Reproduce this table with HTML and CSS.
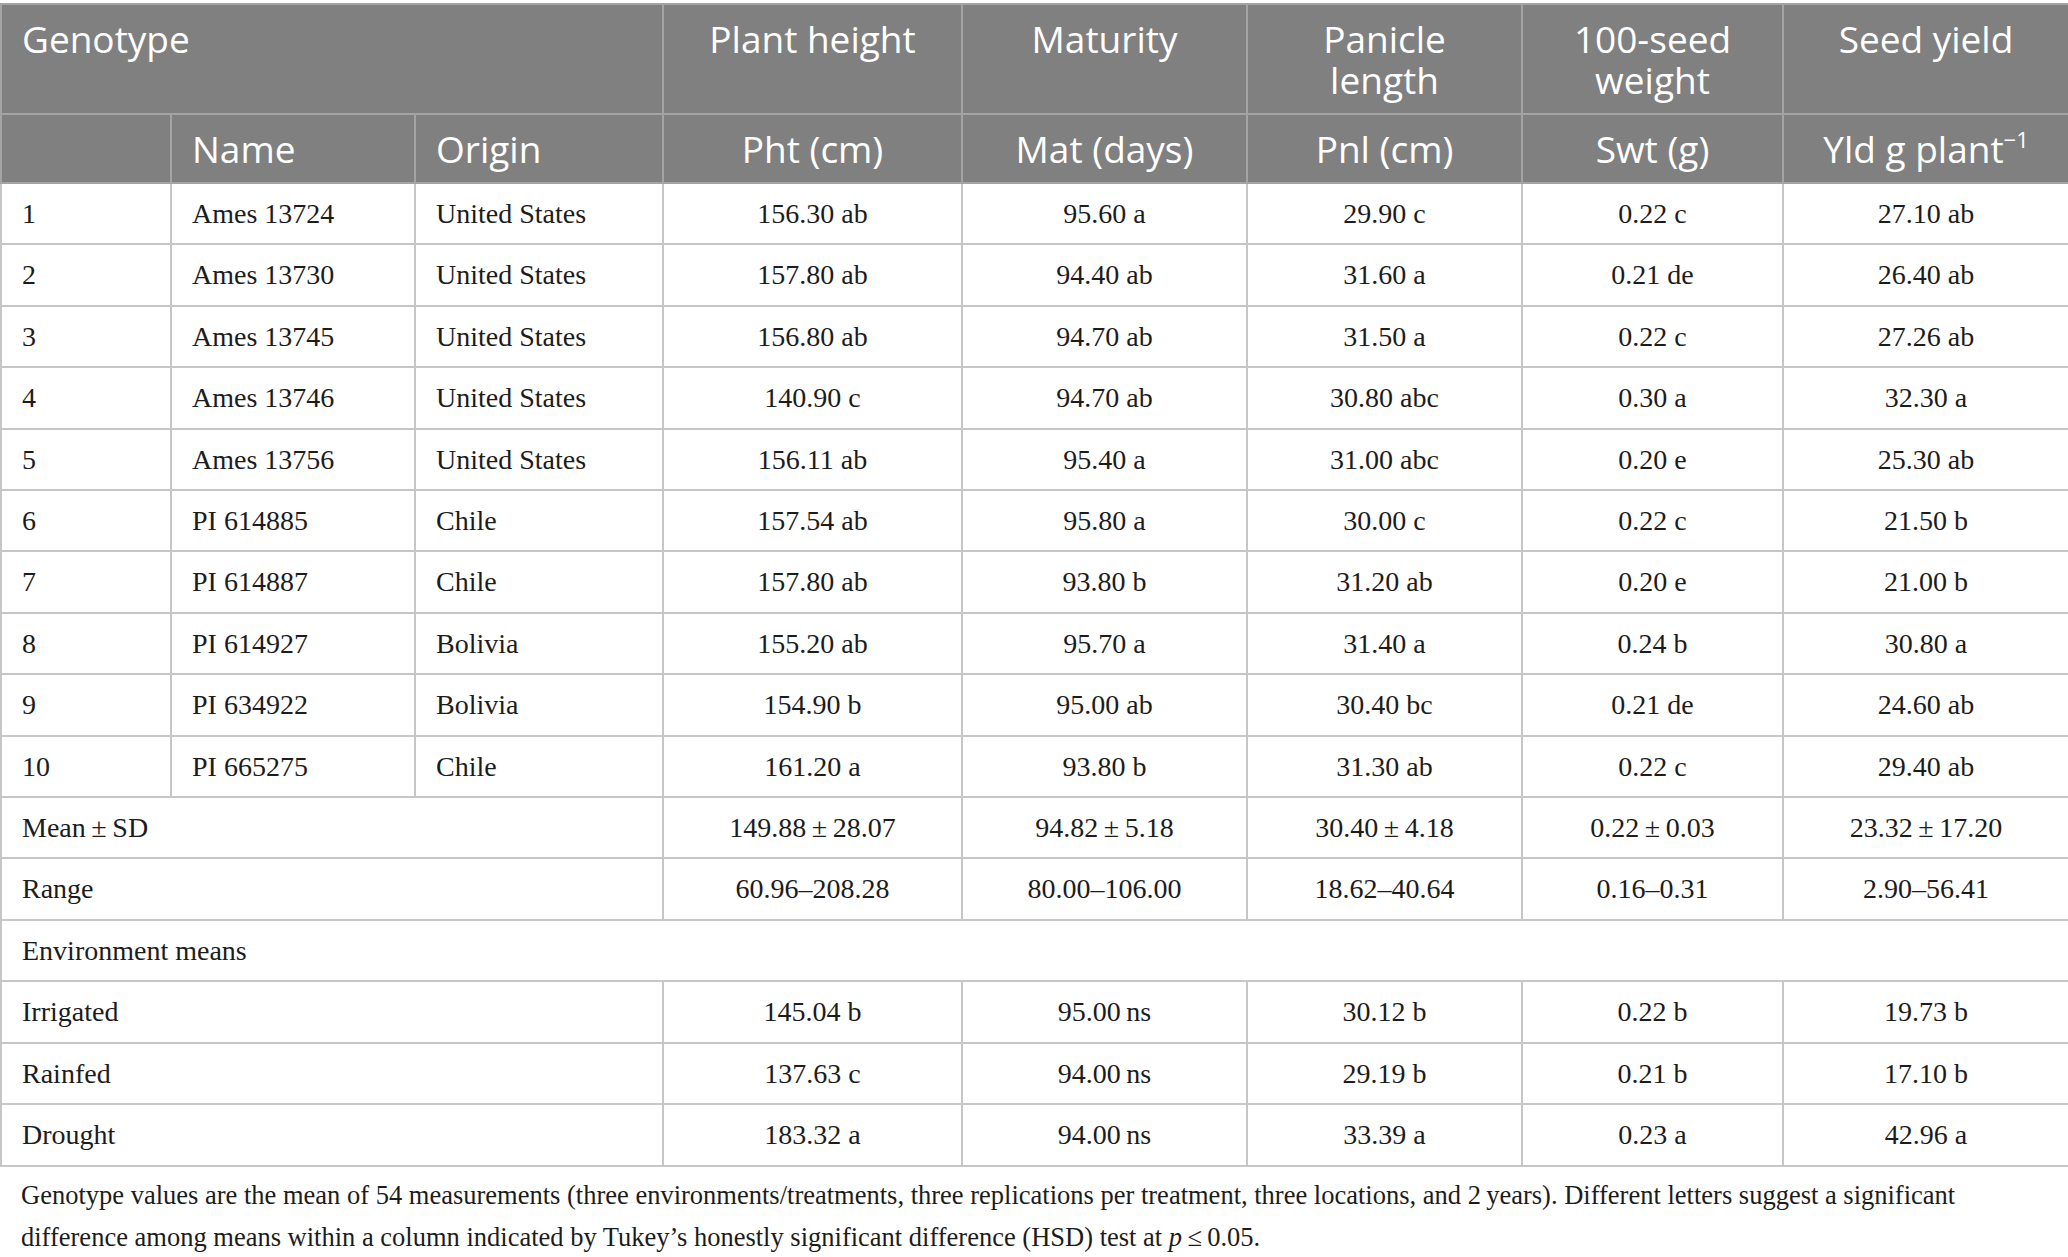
FILE: index.html
```html
<!DOCTYPE html>
<html>
<head>
    <title>Genotype traits</title>
    <link rel="stylesheet" href="styles.css">
</head>
<body>

<table class="traits">
    <colgroup>
        <col style="width: 170px">
        <col style="width: 244px">
        <col style="width: 248px">
        <col style="width: 299px">
        <col style="width: 285px">
        <col style="width: 275px">
        <col style="width: 261px">
        <col style="width: 286px">
    </colgroup>
    <thead>
        <tr class="head-top">
            <th colspan="3" class="left">Genotype</th>
            <th>Plant height</th>
            <th>Maturity</th>
            <th>Panicle<br>length</th>
            <th>100-seed<br>weight</th>
            <th>Seed yield</th>
        </tr>
        <tr class="head-sub">
            <th></th>
            <th class="left">Name</th>
            <th class="left">Origin</th>
            <th>Pht (cm)</th>
            <th>Mat (days)</th>
            <th>Pnl (cm)</th>
            <th>Swt (g)</th>
            <th>Yld g plant<sup>−1</sup></th>
        </tr>
    </thead>
    <tbody>
        <tr><td class="left">1</td><td class="left">Ames 13724</td><td class="left">United States</td><td>156.30 ab</td><td>95.60 a</td><td>29.90 c</td><td>0.22 c</td><td>27.10 ab</td></tr>
        <tr><td class="left">2</td><td class="left">Ames 13730</td><td class="left">United States</td><td>157.80 ab</td><td>94.40 ab</td><td>31.60 a</td><td>0.21 de</td><td>26.40 ab</td></tr>
        <tr><td class="left">3</td><td class="left">Ames 13745</td><td class="left">United States</td><td>156.80 ab</td><td>94.70 ab</td><td>31.50 a</td><td>0.22 c</td><td>27.26 ab</td></tr>
        <tr><td class="left">4</td><td class="left">Ames 13746</td><td class="left">United States</td><td>140.90 c</td><td>94.70 ab</td><td>30.80 abc</td><td>0.30 a</td><td>32.30 a</td></tr>
        <tr><td class="left">5</td><td class="left">Ames 13756</td><td class="left">United States</td><td>156.11 ab</td><td>95.40 a</td><td>31.00 abc</td><td>0.20 e</td><td>25.30 ab</td></tr>
        <tr><td class="left">6</td><td class="left">PI 614885</td><td class="left">Chile</td><td>157.54 ab</td><td>95.80 a</td><td>30.00 c</td><td>0.22 c</td><td>21.50 b</td></tr>
        <tr><td class="left">7</td><td class="left">PI 614887</td><td class="left">Chile</td><td>157.80 ab</td><td>93.80 b</td><td>31.20 ab</td><td>0.20 e</td><td>21.00 b</td></tr>
        <tr><td class="left">8</td><td class="left">PI 614927</td><td class="left">Bolivia</td><td>155.20 ab</td><td>95.70 a</td><td>31.40 a</td><td>0.24 b</td><td>30.80 a</td></tr>
        <tr><td class="left">9</td><td class="left">PI 634922</td><td class="left">Bolivia</td><td>154.90 b</td><td>95.00 ab</td><td>30.40 bc</td><td>0.21 de</td><td>24.60 ab</td></tr>
        <tr><td class="left">10</td><td class="left">PI 665275</td><td class="left">Chile</td><td>161.20 a</td><td>93.80 b</td><td>31.30 ab</td><td>0.22 c</td><td>29.40 ab</td></tr>
        <tr><td colspan="3" class="left">Mean&thinsp;±&thinsp;SD</td><td>149.88&thinsp;±&thinsp;28.07</td><td>94.82&thinsp;±&thinsp;5.18</td><td>30.40&thinsp;±&thinsp;4.18</td><td>0.22&thinsp;±&thinsp;0.03</td><td>23.32&thinsp;±&thinsp;17.20</td></tr>
        <tr><td colspan="3" class="left">Range</td><td>60.96–208.28</td><td>80.00–106.00</td><td>18.62–40.64</td><td>0.16–0.31</td><td>2.90–56.41</td></tr>
        <tr><td colspan="8" class="left">Environment means</td></tr>
        <tr><td colspan="3" class="left">Irrigated</td><td>145.04 b</td><td>95.00&thinsp;ns</td><td>30.12 b</td><td>0.22 b</td><td>19.73 b</td></tr>
        <tr><td colspan="3" class="left">Rainfed</td><td>137.63 c</td><td>94.00&thinsp;ns</td><td>29.19 b</td><td>0.21 b</td><td>17.10 b</td></tr>
        <tr><td colspan="3" class="left">Drought</td><td>183.32 a</td><td>94.00&thinsp;ns</td><td>33.39 a</td><td>0.23 a</td><td>42.96 a</td></tr>
    </tbody>
</table>

<p class="footnote">Genotype values are the mean of 54 measurements (three environments/treatments, three replications per treatment, three locations, and 2&thinsp;years). Different letters suggest a significant difference among means within a column indicated by Tukey’s honestly significant difference (HSD) test at <i>p</i>&thinsp;≤&thinsp;0.05.</p>

</body>
</html>
```

FILE: styles.css
```css
body {
    margin: 0;
    padding: 3px 0 0 0;
    background-color: #fff;
    font-family: "Liberation Serif", "Times New Roman", serif;
    color: #1c1c1c;
}

.traits {
    width: 2068px;
    table-layout: fixed;
    border-collapse: collapse;
}

.traits th,
.traits td {
    text-align: center;
}

.traits .left {
    text-align: left;
}

/* Шапка таблицы */
.traits th {
    background-color: #808080;
    color: #fff;
    font-family: "Open Sans", "Noto Sans", sans-serif;
    font-weight: 400;
    font-size: 37px;
    line-height: 41px;
    border: 2px solid #a4a4a4;
    padding: 13px 20px;
    vertical-align: top;
}

.traits th sup {
    font-size: 22px;
    line-height: 0;
    vertical-align: 15px;
}

/* Строки с данными */
.traits td {
    font-size: 28px;
    line-height: 33.4px;
    padding: 13px 20px;
    border: 2px solid #c6c6c6;
    vertical-align: middle;
}

.footnote {
    font-size: 26.5px;
    line-height: 42px;
    margin: 7px 0 0 0;
    padding: 0 60px 0 21px;
    color: #1c1c1c;
}
```
